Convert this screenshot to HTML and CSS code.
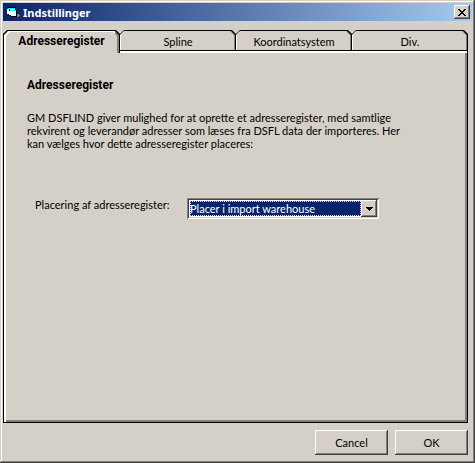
FILE: index.html
```html
<!DOCTYPE html>
<html lang="da">
<head>
  <meta charset="UTF-8">
  <title>Indstillinger</title>
  <link rel="stylesheet" href="styles.css">
</head>
<body>
  <div class="window">
    <header class="titlebar">
      <svg class="app-icon" width="16" height="16" viewBox="0 0 16 16" shape-rendering="crispEdges" aria-hidden="true">
        <path fill="#000" d="M3 3h8v3h1v7H6v-2H3z"/>
        <path fill="#0ff" d="M3 4h7v1H3zM5 6h6v1H5z"/>
        <path fill="#fff" d="M2 5h2v5H2zM5 5h5v1H5zM4 7h7v4H4zM6 11h5v1H6z"/>
        <path fill="#808080" d="M12 10h2v1h1v1h-1v1h-2z"/>
      </svg>
      <h1 class="title">Indstillinger</h1>
      <button class="close" type="button" aria-label="Luk">
        <svg width="8" height="7" viewBox="0 0 8 7" shape-rendering="crispEdges" aria-hidden="true">
          <path d="M0 0h2v1h1v1h2v-1h1v-1h2v1h-1v1h-1v1h-1v1h1v1h1v1h1v1h-2v-1h-1v-1h-2v1h-1v1h-2v-1h1v-1h1v-1h1v-1h-1v-1h-1v-1h-1z"/>
        </svg>
      </button>
    </header>

    <!-- Faneblade -->
    <div class="tabs" role="tablist">
      <button class="tab active" type="button" role="tab" aria-selected="true"><span>Adresseregister</span></button>
      <button class="tab" type="button" role="tab" aria-selected="false"><span>Spline</span></button>
      <button class="tab" type="button" role="tab" aria-selected="false"><span>Koordinatsystem</span></button>
      <button class="tab" type="button" role="tab" aria-selected="false"><span>Div.</span></button>
    </div>

    <main class="panel" role="tabpanel">
      <h2 class="heading">Adresseregister</h2>
      <p class="description">GM DSFLIND giver mulighed for at oprette et adresseregister, med samtlige rekvirent og leverandør adresser som læses fra DSFL data der importeres. Her kan vælges hvor dette adresseregister placeres:</p>
      <div class="field">
        <label for="placement">Placering af adresseregister:</label>
        <div class="combo">
          <select id="placement">
            <option>Placer i import warehouse</option>
          </select>
          <span class="combo-arrow">
            <svg width="7" height="4" viewBox="0 0 7 4" shape-rendering="crispEdges" aria-hidden="true">
              <path d="M0 0h7v1h-1v1h-1v1h-1v1h-1v-1h-1v-1h-1v-1h-1z"/>
            </svg>
          </span>
        </div>
      </div>
    </main>

    <footer class="actions">
      <button class="btn" type="button">Cancel</button>
      <button class="btn" type="button">OK</button>
    </footer>
  </div>
</body>
</html>
```

FILE: styles.css
```css
* {
  margin: 0;
  padding: 0;
  box-sizing: border-box;
}

body {
  background: #d4d0c8;
  color: #000;
  font-family: Lato, "Liberation Sans", Arial, sans-serif;
  font-size: 11px;
  line-height: 13px;
}

button,
select {
  font: inherit;
  color: inherit;
  border: 0;
  border-radius: 0;
}

/* ---------- Window ---------- */
.window {
  display: flex;
  flex-direction: column;
  min-height: 100vh;
  padding: 3px;
  background: #d4d0c8;
  box-shadow: inset -1px -1px #404040, inset 1px 1px #d4d0c8, inset -2px -2px #808080, inset 2px 2px #fff;
}

.titlebar {
  display: flex;
  align-items: center;
  height: 18px;
  padding: 0 2px;
  background: linear-gradient(to right, #0a246a, #a6caf0);
}

.app-icon {
  margin-right: 2px;
}

.title {
  flex: 1;
  color: #fff;
  font-family: "Noto Sans", Tahoma, sans-serif;
  font-size: 11px;
  font-weight: bold;
}

.close {
  display: flex;
  align-items: center;
  justify-content: center;
  width: 16px;
  height: 14px;
  background: #d4d0c8;
  box-shadow: inset -1px -1px #404040, inset 1px 1px #fff, inset -2px -2px #808080;
}

/* ---------- Tabs ---------- */
.tabs {
  display: flex;
  margin: 9px 4px 0 0;
}

.tab {
  position: relative;
  flex: 1;
  height: 20px;
  padding-top: 2px;
  background: #000;
  clip-path: polygon(0 4px, 4px 0, calc(100% - 4px) 0, 100% 4px, 100% 100%, 0 100%);
}

/* light and dark bevel inside the black outline */
.tab::before {
  content: "";
  position: absolute;
  inset: 1px 1px 0 0;
  background: linear-gradient(to right, #fff 50%, #808080 50%);
  clip-path: polygon(0 4px, 4px 0, calc(100% - 4px) 0, 100% 4px, 100% 100%, 0 100%);
}

.tab::after {
  content: "";
  position: absolute;
  inset: 1px 2px 0 1px;
  background: #d4d0c8;
  clip-path: polygon(0 4px, 4px 0, calc(100% - 4px) 0, 100% 4px, 100% 100%, 0 100%);
}

.tab span {
  position: relative;
  z-index: 1;
}

.tab.active {
  z-index: 1;
  flex: 1 1 1px;
  height: 23px;
  margin-bottom: -3px;
  padding-top: 0;
  font-family: Roboto, "Liberation Sans", Arial, sans-serif;
  font-size: 12px;
  font-weight: bold;
}

.tab.active::before {
  left: 1px;
  background: linear-gradient(to left, #808080 4px, #fff 4px);
}

.tab.active::after {
  inset: 2px 3px 0 3px;
}

/* ---------- Panel ---------- */
.panel {
  flex: 1;
  margin-right: 4px;
  padding: 28px 23px 20px;
  border: 1px solid #000;
  box-shadow: inset 2px 2px #fff, inset -2px -2px #808080;
}

.heading {
  margin-bottom: 19px;
  font-family: Roboto, "Liberation Sans", Arial, sans-serif;
  font-size: 12px;
  line-height: 13px;
}

.description {
  max-width: 384px;
}

.field {
  display: flex;
  align-items: flex-start;
  margin: 48px 0 0 8px;
}

.field label {
  flex: 0 0 152px;
}

.combo {
  position: relative;
  width: 192px;
  height: 21px;
  padding: 3px;
  background: #fff;
  box-shadow: inset 1px 1px #808080, inset -1px -1px #fff, inset 2px 2px #404040, inset -2px -2px #d4d0c8;
}

.combo select {
  display: block;
  width: 171px;
  height: 15px;
  appearance: none;
  background: #0a246a;
  color: #fff;
  outline: 1px dotted #f5db95;
  outline-offset: -1px;
}

.combo-arrow {
  position: absolute;
  top: 2px;
  right: 2px;
  bottom: 2px;
  display: flex;
  align-items: center;
  justify-content: center;
  width: 16px;
  background: #d4d0c8;
  box-shadow: inset -1px -1px #404040, inset 1px 1px #fff, inset -2px -2px #808080;
  pointer-events: none;
}

/* ---------- Buttons ---------- */
.actions {
  display: flex;
  justify-content: flex-end;
  gap: 7px;
  padding: 7px 4px 5px;
}

.btn {
  width: 73px;
  height: 25px;
  background: #d4d0c8;
  box-shadow: inset -1px -1px #404040, inset 1px 1px #fff, inset -2px -2px #808080;
}
```
